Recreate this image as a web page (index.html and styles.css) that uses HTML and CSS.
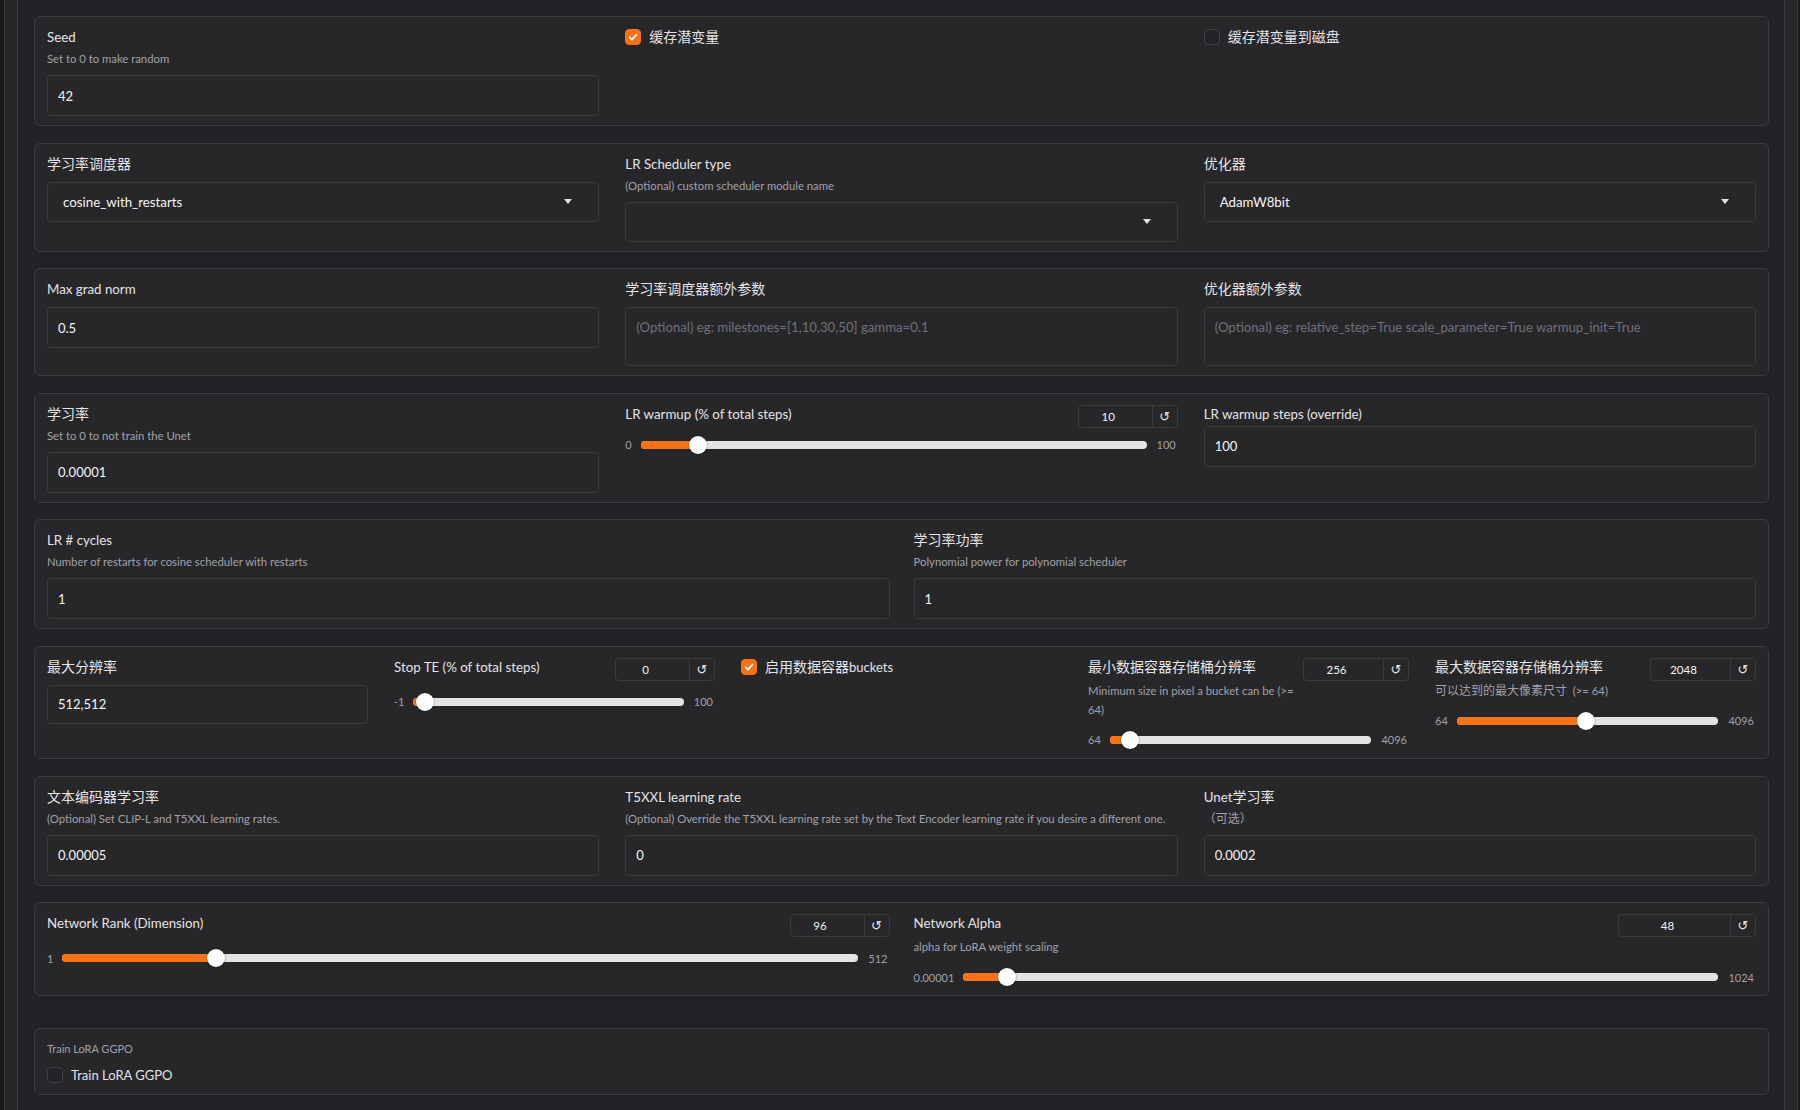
FILE: index.html
```html
<!DOCTYPE html>
<html lang="zh">
<head>
<meta charset="utf-8">
<title>Training parameters</title>
<link rel="stylesheet" href="styles.css">
</head>
<body>
<div class="shell">
  <div class="panel">

    <section class="card cols3">
      <div class="col">
        <div class="lbl">Seed</div>
        <div class="info">Set to 0 to make random</div>
        <input class="field" type="text" value="42">
      </div>
      <div class="col">
        <label class="check"><span class="box on"><svg viewBox="0 0 16 16"><path d="M4.2 8.4l2.6 2.6L11.8 5.4"/></svg></span><span class="ctext"><span class="zh">缓存潜变量</span></span></label>
      </div>
      <div class="col">
        <label class="check"><span class="box"></span><span class="ctext"><span class="zh">缓存潜变量到磁盘</span></span></label>
      </div>
    </section>

    <section class="card cols3">
      <div class="col">
        <div class="lbl"><span class="zh">学习率调度器</span></div>
        <div class="select"><span>cosine_with_restarts</span><svg class="caret" viewBox="0 0 8 5"><path d="M0 0h8L4 5z"/></svg></div>
      </div>
      <div class="col">
        <div class="lbl">LR Scheduler type</div>
        <div class="info">(Optional) custom scheduler module name</div>
        <div class="select"><span></span><svg class="caret" viewBox="0 0 8 5"><path d="M0 0h8L4 5z"/></svg></div>
      </div>
      <div class="col">
        <div class="lbl"><span class="zh">优化器</span></div>
        <div class="select"><span>AdamW8bit</span><svg class="caret" viewBox="0 0 8 5"><path d="M0 0h8L4 5z"/></svg></div>
      </div>
    </section>

    <section class="card cols3">
      <div class="col">
        <div class="lbl">Max grad norm</div>
        <input class="field" type="text" value="0.5">
      </div>
      <div class="col">
        <div class="lbl"><span class="zh">学习率调度器额外参数</span></div>
        <textarea class="area" placeholder="(Optional) eg: milestones=[1,10,30,50] gamma=0.1"></textarea>
      </div>
      <div class="col">
        <div class="lbl"><span class="zh">优化器额外参数</span></div>
        <textarea class="area" placeholder="(Optional) eg: relative_step=True scale_parameter=True warmup_init=True"></textarea>
      </div>
    </section>

    <section class="card cols3">
      <div class="col">
        <div class="lbl"><span class="zh">学习率</span></div>
        <div class="info">Set to 0 to not train the Unet</div>
        <input class="field" type="text" value="0.00001">
      </div>
      <div class="col">
        <div class="shead">
          <div class="stxt"><div class="lbl">LR warmup (% of total steps)</div></div>
          <div class="num"><span class="v">10</span><span class="r">↺</span></div>
        </div>
        <div class="slider near">
          <span class="lim">0</span>
          <div class="track" style="--p:0.1"><div class="fill"></div><div class="thumb"></div></div>
          <span class="lim max">100</span>
        </div>
      </div>
      <div class="col">
        <div class="lbl">LR warmup steps (override)</div>
        <input class="field tight" type="text" value="100">
      </div>
    </section>

    <section class="card cols2">
      <div class="col">
        <div class="lbl">LR # cycles</div>
        <div class="info">Number of restarts for cosine scheduler with restarts</div>
        <input class="field" type="text" value="1">
      </div>
      <div class="col">
        <div class="lbl"><span class="zh">学习率功率</span></div>
        <div class="info">Polynomial power for polynomial scheduler</div>
        <input class="field" type="text" value="1">
      </div>
    </section>

    <section class="card cols5">
      <div class="col">
        <div class="lbl"><span class="zh">最大分辨率</span></div>
        <input class="field short" type="text" value="512,512">
      </div>
      <div class="col">
        <div class="shead">
          <div class="stxt"><div class="lbl">Stop TE (% of total steps)</div></div>
          <div class="num"><span class="v">0</span><span class="r">↺</span></div>
        </div>
        <div class="slider">
          <span class="lim">-1</span>
          <div class="track" style="--p:0.0099"><div class="fill"></div><div class="thumb"></div></div>
          <span class="lim max">100</span>
        </div>
      </div>
      <div class="col">
        <label class="check"><span class="box on"><svg viewBox="0 0 16 16"><path d="M4.2 8.4l2.6 2.6L11.8 5.4"/></svg></span><span class="ctext"><span class="zh">启用数据容器</span>buckets</span></label>
      </div>
      <div class="col">
        <div class="shead">
          <div class="stxt">
            <div class="lbl"><span class="zh">最小数据容器存储桶分辨率</span></div>
            <div class="sinfo">Minimum size in pixel a bucket can be (&gt;= 64)</div>
          </div>
          <div class="num wide"><span class="v">256</span><span class="r">↺</span></div>
        </div>
        <div class="slider">
          <span class="lim">64</span>
          <div class="track" style="--p:0.0476"><div class="fill"></div><div class="thumb"></div></div>
          <span class="lim max">4096</span>
        </div>
      </div>
      <div class="col">
        <div class="shead">
          <div class="stxt">
            <div class="lbl"><span class="zh">最大数据容器存储桶分辨率</span></div>
            <div class="sinfo"><span class="zh">可以达到的最大像素尺寸</span>&nbsp;&nbsp;(&gt;= 64)</div>
          </div>
          <div class="num wide"><span class="v">2048</span><span class="r">↺</span></div>
        </div>
        <div class="slider">
          <span class="lim">64</span>
          <div class="track" style="--p:0.492"><div class="fill"></div><div class="thumb"></div></div>
          <span class="lim max">4096</span>
        </div>
      </div>
    </section>

    <section class="card cols3">
      <div class="col">
        <div class="lbl"><span class="zh">文本编码器学习率</span></div>
        <div class="info">(Optional) Set CLIP-L and T5XXL learning rates.</div>
        <input class="field" type="text" value="0.00005">
      </div>
      <div class="col">
        <div class="lbl">T5XXL learning rate</div>
        <div class="info">(Optional) Override the T5XXL learning rate set by the Text Encoder learning rate if you desire a different one.</div>
        <input class="field" type="text" value="0">
      </div>
      <div class="col">
        <div class="lbl">Unet<span class="zh">学习率</span></div>
        <div class="info"><span class="zh">（可选）</span></div>
        <input class="field" type="text" value="0.0002">
      </div>
    </section>

    <section class="card cols2">
      <div class="col">
        <div class="shead">
          <div class="stxt"><div class="lbl">Network Rank (Dimension)</div></div>
          <div class="num"><span class="v">96</span><span class="r">↺</span></div>
        </div>
        <div class="slider">
          <span class="lim">1</span>
          <div class="track" style="--p:0.186"><div class="fill"></div><div class="thumb"></div></div>
          <span class="lim max">512</span>
        </div>
      </div>
      <div class="col">
        <div class="shead">
          <div class="stxt">
            <div class="lbl">Network Alpha</div>
            <div class="sinfo">alpha for LoRA weight scaling</div>
          </div>
          <div class="num xwide"><span class="v">48</span><span class="r">↺</span></div>
        </div>
        <div class="slider">
          <span class="lim">0.00001</span>
          <div class="track" style="--p:0.0469"><div class="fill"></div><div class="thumb"></div></div>
          <span class="lim max">1024</span>
        </div>
      </div>
    </section>

    <section class="card single">
      <div class="col">
        <div class="smlbl">Train LoRA GGPO</div>
        <label class="check row"><span class="box"></span><span class="ctext">Train LoRA GGPO</span></label>
      </div>
    </section>

  </div>
</div>
</body>
</html>
```

FILE: styles.css
```css
* {
  box-sizing: border-box;
  margin: 0;
  padding: 0;
}

html,
body {
  width: 1800px;
  height: 1110px;
  overflow: hidden;
}

body {
  background: #1b1b1d;
  font-family: "Lato", "Noto Sans CJK SC", sans-serif;
  font-size: 13.3px;
  color: #e4e4e7;
}

.shell {
  margin-left: 4px;
  width: 1794px;
  height: 1110px;
  padding: 0 12px;
  background: #27272a;
  border-left: 1px solid #3a3a3f;
  border-right: 1px solid #3a3a3f;
}

.panel {
  height: 100%;
  padding: 16px 15px 0 16px;
  background: #212227;
  border-left: 1px solid #3a3a3f;
  border-right: 1px solid #3a3a3f;
  display: flex;
  flex-direction: column;
  gap: 16.6px;
}

.card {
  display: flex;
  align-items: flex-start;
  padding: 10px 12px 9px;
  background: #27272a;
  border: 1px solid #3a3a3f;
  border-radius: 6px;
}

.cols3 { gap: 26px; }
.cols5 { gap: 26px; }
.cols2 { gap: 24px; }
.single { margin-top: 15px; }

.col {
  flex: 1 1 0;
  min-width: 0;
  display: flex;
  flex-direction: column;
}

.zh {
  line-height: 1;
}

.lbl {
  height: 20px;
  font-size: 13.3px;
  line-height: 20px;
  color: #e4e4e7;
  white-space: nowrap;
}

.lbl .zh,
.check .zh {
  font-size: 14px;
}

.info {
  height: 18px;
  margin-top: 3px;
  font-size: 11.3px;
  line-height: 18px;
  color: #a1a1aa;
  white-space: nowrap;
}

.info .zh,
.sinfo .zh {
  font-size: 12px;
}

.field,
.select,
.area {
  margin-top: 8px;
  width: 100%;
  background: #27272a;
  border: 1px solid #3a3a3f;
  border-radius: 4px;
  color: #f4f4f5;
  font-family: "Lato", "Noto Sans CJK SC", sans-serif;
  font-size: 13px;
  outline: none;
}

.info + .field,
.info + .select {
  margin-top: 7px;
}

.field {
  height: 41px;
  padding: 0 10px;
}

.field.tight { margin-top: 2px; }
.field.short { height: 39px; }

.select {
  height: 40px;
  padding: 0 26px 0 15px;
  font-size: 13.3px;
  display: flex;
  align-items: center;
  justify-content: space-between;
}

.caret {
  width: 8px;
  height: 5px;
  fill: #e4e4e7;
}

.area {
  display: block;
  height: 59px;
  padding: 9px 10px;
  line-height: 20px;
  font-size: 13.2px;
  resize: none;
}

.area::placeholder {
  color: #71717a;
}

/* checkbox */
.check {
  display: flex;
  align-items: center;
  gap: 8px;
  height: 20px;
  font-size: 13px;
  color: #e4e4e7;
  white-space: nowrap;
}

.ctext {
  line-height: 20px;
}

.check.row {
  margin-top: 6px;
}

.box {
  flex: none;
  width: 16px;
  height: 16px;
  border-radius: 4px;
  border: 1px solid #3f3f46;
  background: #242427;
  display: flex;
  align-items: center;
  justify-content: center;
}

.box.on {
  background: #f97316;
  border-color: #f97316;
}

.box svg {
  width: 14px;
  height: 14px;
  fill: none;
  stroke: #fff;
  stroke-width: 2;
  stroke-linecap: round;
  stroke-linejoin: round;
}

.smlbl {
  height: 20px;
  font-size: 11px;
  line-height: 20px;
  color: #a1a1aa;
}

/* slider block */
.shead {
  display: flex;
  align-items: flex-start;
  justify-content: space-between;
  gap: 2px;
  min-height: 24px;
}

.stxt {
  flex: 1 1 auto;
  min-width: 0;
}

.sinfo {
  margin-top: 4px;
  font-size: 11.3px;
  line-height: 19px;
  color: #a1a1aa;
}

.num {
  flex: none;
  margin-top: 1px;
  height: 23px;
  display: flex;
  border: 1px solid #3a3a3f;
  border-radius: 4px;
  font-size: 11.5px;
  line-height: 21px;
  color: #f4f4f5;
}

.num .v {
  width: 74px;
  padding-right: 14px;
  text-align: center;
  border-right: 1px solid #3a3a3f;
}

.num.wide .v { width: 80px; }
.num.xwide .v { width: 112px; }

.num .r {
  width: 24px;
  text-align: center;
  font-family: "DejaVu Sans", sans-serif;
  font-size: 13px;
  color: #e4e4e7;
}

.slider {
  margin-top: 12px;
  height: 18px;
  display: flex;
  align-items: center;
  gap: 9px;
}

.slider.near { margin-top: 8px; }

.lim {
  flex: none;
  font-size: 11px;
  color: #a1a1aa;
}

.lim.max {
  margin-left: 1px;
  padding-right: 2px;
}

.track {
  position: relative;
  flex: 1 1 auto;
  height: 8px;
  border-radius: 4px;
  background: #e4e4e7;
}

.fill {
  height: 100%;
  width: calc(9px + var(--p) * (100% - 18px));
  border-radius: 4px;
  background: #f97316;
}

.thumb {
  position: absolute;
  top: -5px;
  left: calc(var(--p) * (100% - 18px));
  width: 18px;
  height: 18px;
  border-radius: 50%;
  background: #fff;
  box-shadow: 0 0 2px rgba(0, 0, 0, 0.5);
}
```
